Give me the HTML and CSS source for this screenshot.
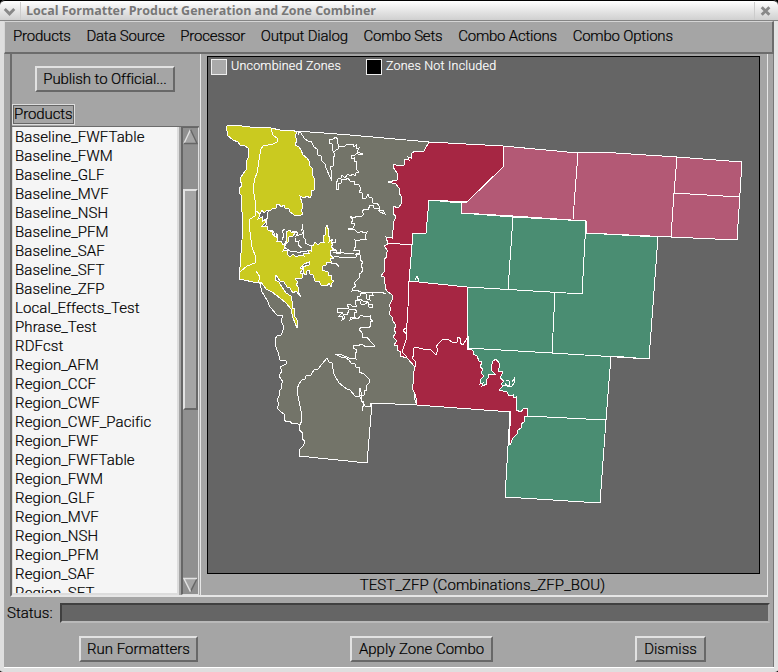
FILE: index.html
```html
<!DOCTYPE html>
<html lang="en">
<head>
<meta charset="utf-8">
<title>Local Formatter Product Generation and Zone Combiner</title>
<link rel="stylesheet" href="styles.css">
</head>
<body>
<div class="window">
  <header class="titlebar">
    <svg class="title-arrow" width="21" height="18" viewBox="0 0 21 18"><path d="M5 7l5 5 5-5" /></svg>
    <h1>Local Formatter Product Generation and Zone Combiner</h1>
    <svg class="title-close" width="24" height="18" viewBox="0 0 24 18"><path d="M7 5l8 8M15 5l-8 8" /></svg>
  </header>
  <nav class="menubar">
    <span>Products</span><span>Data Source</span><span>Processor</span><span>Output Dialog</span><span>Combo Sets</span><span>Combo Actions</span><span>Combo Options</span>
  </nav>
  <main class="panes">
    <aside class="side">
      <button class="btn publish">Publish to Official...</button>
      <div class="list-label">Products</div>
      <div class="list-wrap">
        <ul class="list">
          <li>Baseline_FWFTable</li><li>Baseline_FWM</li><li>Baseline_GLF</li><li>Baseline_MVF</li><li>Baseline_NSH</li><li>Baseline_PFM</li><li>Baseline_SAF</li><li>Baseline_SFT</li><li>Baseline_ZFP</li><li>Local_Effects_Test</li><li>Phrase_Test</li><li>RDFcst</li><li>Region_AFM</li><li>Region_CCF</li><li>Region_CWF</li><li>Region_CWF_Pacific</li><li>Region_FWF</li><li>Region_FWFTable</li><li>Region_FWM</li><li>Region_GLF</li><li>Region_MVF</li><li>Region_NSH</li><li>Region_PFM</li><li>Region_SAF</li><li>Region_SFT</li>
        </ul>
        <div class="scrollbar">
          <svg width="16" height="17" viewBox="0 0 16 17"><path class="arrow" d="M8 1L15 16H1z"/><path class="hi" d="M1 16L8 1"/><path class="lo" d="M8 1l7 15H1"/></svg>
          <div class="track"><div class="thumb"></div></div>
          <svg width="16" height="17" viewBox="0 0 16 17"><path class="arrow" d="M1 1H15L8 15z"/><path class="lo" d="M15 1L8 15"/><path class="hi" d="M15 1H1l7 14"/></svg>
        </div>
      </div>
    </aside>
    <section class="map-pane">
      <div class="canvas">
        <div class="legend"><i class="swatch grey"></i><span class="first">Uncombined Zones</span><i class="swatch black"></i><span>Zones Not Included</span></div>
        <svg class="map" width="551" height="494" viewBox="208 78 551 494">
          <path class="brown" d="M297 131L350 135 429 142 440 146V300L415 367 413 375 414 380 412 388 415 394 414 398 417 405 372 403 367 463 299 456 299 450 303 446 305 442 302 438 303 433 299 430 300 425 296 423 292 424 290 421 286 422 284 419 285 415 280 411 277 408 279 404 277 400 279 396 279 391 282 388 281 384 283 382 279 376 282 371 280 367 286 364 286 361 280 360 278 352 275 345 275 339 278 335 281 335 284 328 281 320 283 316 277 315 270 307 267 300 262 292 258 275 270 200z"/>
          <path class="yellow" d="M227 126L233 125 250 127 271 128 280 130 292 130 297 132 295 136 297 140 295 145 299 147 301 150 303 155 307 158 309 161 310 166 313 169 312 174 314 178 315 182 314 190 311 191 312 194 310 198 307 196 304 198 300 196 302 203 303 208 301 210 303 214 299 216 294 215 290 212 289 209 285 208 284 205 281 207 279 204 277 204 276 208 272 209 270 211 267 210 264 213 262 210 260 214 256 211 260 215 258 219 262 217 262 222 266 219 265 223 262 226 267 226 268 230 273 230 272 234 276 237 276 233 278 235 277 241 281 241 283 245 285 243 285 247 283 251 287 250 287 254 290 257 293 254 296 257 300 255 304 256 303 253 309 253 308 247 311 245 313 246 315 242 318 245 321 242 324 242 323 236 325 235 325 229 327 225 329 232 328 235 330 238 329 242 333 239 331 243 333 244 331 247 335 250 331 250 330 255 334 258 330 259 332 263 327 262 326 265 323 266 322 270 328 272 328 275 331 275 332 280 334 281 332 283 331 287 329 283 327 286 321 285 319 281 315 281 313 275 310 274 309 270 307 271 306 275 303 273 304 268 302 267 309 265 309 262 304 264 300 268 303 269 300 273 303 274 302 278 298 278 295 278 298 283 296 284 299 288 298 291 301 297 296 291 293 293 290 288 287 287 284 282 280 281 276 275 275 280 279 282 282 287 286 293 291 296 292 301 292 308 295 309 294 315 297 320 297 328 293 318 291 309 286 303 280 298 272 292 266 289 261 282 258 283 239 279 240 267 242 240 243 216 241 207 242 196 240 194 239 188 242 186 240 179 243 174 246 170 246 163 249 155 248 148 245 146 240 145 238 142 233 140 227 135 228 132 226 130z"/>
          <path class="brown" d="M284 247l3-4-1-6 3-1 0-3 6-2 3 2-2 3 6-2 2-4-1 7 3 3-1 3 6 3 0 5-3-1-2 2-3-1-5 2-2-2-6 0-3-2z"/>
          <path class="yellow" d="M285 244l2-5-1-7 4-2 1 2 5 0-3 4-4 1-1 5z"/>
          <path class="line" d="M271 128L273 135 278 139 277 142 273 144 263 146 261 149 260 154 257 173 255 178 253 188 254 194 255 200 256 211 255 216 250 219 249 225 252 247 256 258 255 263 247 266 240 272M256 271L260 277 258 283M298 135l0-3 3 1 3 5 5 4 2-1 3 6 3 2 1 6 3 1 1 5 3 3 1 4 5 11M331 181l0-11-1-3 3-1 0-8 2-3-2-4-1-7-3-1 0-3 4-1 3-2 2 3-1 3 2 2-1 4-5 3M338 147l2-1 4 1 3-3 6 0 1 3 2-2 0 4 3-1-2 4 6 2-4 1-2-2-3 3-3-1 0 4 3-1 0 3 3 1-1 7 3 3-3 1-1 3-2-2-3 2-2-2-3 4-3-3-1 3-3 1-2 5 0 6 3-1-1-6 3 0 1-4 3 1 3-2 2 3 5 0-1 3 5 1 2 4-2 3 3 1 0 5 4 0 2-4 1 3 3 1 1 5 4 0 3 4-1 3 4 0 2 4-5-2-1-3-5-1-1-3-3 0-2 5-4-1-2 3 2 2-3 3-4-1-3 2-4-2 3 4-2 3 4 1-2 4-5 1 7 1 3 3 4-2 1 2 4-1-2 4 1 3-5 0-2 2-4-1 1 5-2 5 5 0 0 4-2 1-1 2-12 1-10-2"/>
          <path class="line" d="M355 255l3-2 3 3-1 4 3 2-2 3 2 5-2 3-2 1 0 4-5 5 2 3-3 2-1 3 4-1 5 2 20 0 5 2M372 292l1 3-4 0 1 5-3-1-1-5-5-1-1 3-3 1 0 4 3-2 4 3 3-1 2 3 4 1-1 3-3-1-1-5-4 3-3-1-1-3-4-1-1 4 2 2-4 1-3-3-3 1 2 3-12 1 0 3 6 0-4 4 4 0-1 4 3-2-2-4 4 1 2-5 6-1 2 3-3 1 1 4-4 0-1 3 4-2 4 1 3-4 4 2 5-1 0 3 3 2-3 1 1 4-3 2-6-1-3 2 3 4 0 4 5 0 3 4 5 5-9 1-4-3-5 2-4-1 0 3 4 2-2 5 1 4-7-1-7-3-7-1 6 3 4 0 4 3 2 3 4 1 1 3 3 0 0 5 5 2 5 5 0 4-3 3 1 4-3 1 0 4-2 1-2-8-1 7 3 1-1 5 3 1-2 9"/>
          <path class="line" d="M300 425l2-5-1-9-3-15-1-7 2-5 3-4 3-1 1-3 5-1 3-5 4-1 9-11 2 4 3 1 2 11 5 9 8 6 3 1 5 6 5 1 5 9 5 0 0-3 4 1M332 249l4 1 1 4 4-1-1-4M331 263l5 0 3 4M331 242l4 0 0-3M302 248l-4-3 1-4-3 1-1-4M285 229l-3 2 2 4-2 5M301 231l2-3-1-4M275 235l-2-4-3 0M333 252l21 2"/>
          <path class="green" d="M429 200L461 203V213L513 217 586 221V233L658 237 649 359 611 356 606 420 600 503 505 497 510 412 440 390 409 280 412 233 425 233z"/>
          <path class="pink" d="M503 146L578 153 600 152 677 157 742 162 737 240 671 237 586 233V221L513 216 462 213 461 203 467 202 503 167z"/>
          <path class="crimson" d="M429 142L503 146V167L467 202 429 200 426 233 413 233 409 281 467 287V349L471 349 474 352 473 354 477 356 479 361 482 362 480 367 483 369 481 373 484 376 481 379 480 384 483 383 482 386 487 384 486 380 488 378 488 375 492 374 495 374 491 370 491 367 493 361 496 359 499 363 499 368 498 371 503 372 501 376 500 378 504 381 501 384 503 386 499 390 507 392 509 396 513 395 513 398 516 397V410L521 412 524 408 528 409 527 416 524 417 524 422 521 424 521 428 518 430 517 434 513 438 510 445 509 440 511 412 417 405 416 398 415 394 412 388 414 380 413 375 415 367 407 358 400 356 401 352 397 350 398 346 394 345 397 341 393 337 396 333 394 330 396 325 393 321 392 317 389 314 391 308 389 306 392 300 392 295 387 291 385 288 385 284 384 277 381 276 384 272 384 259 387 257 386 253 388 251 384 246 388 244 386 237 392 238 392 233 394 227 393 223 396 217 393 213 393 206 398 208 402 203 401 196 399 193 399 188 396 184 388 182 397 180 397 173 393 167 394 164 398 166 404 165 405 159 409 160 408 157 411 158 411 154 415 151 424 151z"/>
          <path class="line" d="M387 243L412 245M409 281L408 307 406 340 402 352 407 357M406 328l-3 2 3 4M415 367l0-6-3-3 2-3-1-6 2-2 8 2 7 0 6 6 2-6-2-2 2-3 4-4 6-1 4 3 5 0 1-5 3 2-1 4 3 2 3-5 2-4 1 13M415 280l2-4 2 5M513 217L508 290M586 221L582 294M467 287L583 294M555 292L552 353M467 348L552 353 649 359M611 356L606 420 527 416M578 153L573 219M677 157L674 193 671 237M674 193L739 197M502 385l7 0 0-4-3-1M505 383l2 3 5 0 2-3 0-4-2 3"/>
        </svg>
      </div>
      <p class="caption">TEST_ZFP (Combinations_ZFP_BOU)</p>
    </section>
  </main>
  <div class="status"><label>Status:</label><div class="status-field"></div></div>
  <footer class="actions">
    <button class="btn run">Run Formatters</button>
    <button class="btn apply">Apply Zone Combo</button>
    <button class="btn dismiss">Dismiss</button>
  </footer>
</div>
</body>
</html>
```

FILE: styles.css
```css
* { box-sizing: border-box; }
body { margin: 0; background: #000; font: 300 15px/19px Roboto, sans-serif; color: #000; overflow: hidden; -webkit-text-stroke: 0.2px; }
.window { width: 778px; height: 672px; background: #a5a5a5; border: solid #dedede; border-width: 0 4px 4px; border-right-color: #e3e3e3; border-radius: 5px 5px 3px 3px; display: flex; flex-direction: column; box-shadow: inset -1px 0 #777; }
.titlebar { margin: 0 -4px; flex: 0 0 20px; border-top: 1px solid #000; border-bottom: 1px solid #858585; background: linear-gradient(#fff, #e4e4e4 55%, #d0d0d0); display: flex; align-items: center; border-radius: 5px 5px 0 0; }
.titlebar h1 { flex: 1; margin: 0; padding-left: 5px; font: bold 12.5px/19px "Open Sans", sans-serif; color: #777; letter-spacing: -0.02px; white-space: nowrap; -webkit-text-stroke: 0; }
.titlebar svg { fill: none; stroke: #888; stroke-width: 3; }
.title-arrow { border-right: 1px solid #ccc; }
.title-close { border-left: 1px solid #ccc; }
.menubar { flex: 0 0 33px; display: flex; align-items: center; padding: 0 8px 2px; gap: 15.7px; border: 1px solid #d5d5d5; border-right: 2px solid #6c6c6c; border-bottom: 2px solid #6c6c6c; white-space: nowrap; letter-spacing: -0.2px; }
.panes { flex: 0 0 543px; height: 543px; min-height: 0; margin: 0 6px; display: flex; border-left: 2px solid #6c6c6c; border-bottom: 2px solid #e6e6e6; border-right: 1px solid #e6e6e6; }
.side { width: 189px; height: 541px; border-right: 1px solid #e6e6e6; display: flex; flex-direction: column; align-items: flex-start; }
.btn { height: 26px; padding: 0; border: 2px solid; border-color: #e2e2e2 #686868 #686868 #e2e2e2; background: #a5a5a5; font: inherit; color: #000; white-space: nowrap; letter-spacing: 0; }
.publish { width: 140px; flex-shrink: 0; margin: 12px 0 12px 23px; letter-spacing: -0.1px; }
.list-label { width: 63px; height: 21px; flex-shrink: 0; margin-bottom: 1px; border: 1px solid #dedede; outline: 1px solid #666; outline-offset: -2px; padding-left: 1px; letter-spacing: -0.1px; }
.list-wrap { width: 187px; flex: 1 1 0; min-height: 0; display: flex; justify-content: space-between; border-top: 1px solid #6c6c6c; }
.list { width: 167px; margin: 0; padding: 1px 0 0 2px; border: solid #dcdcdc; border-width: 0 2px 2px 1px; background: #f5f5f5; list-style: none; overflow: hidden; letter-spacing: 0.1px; }
.list li { height: 19px; }
.scrollbar { width: 18px; border: 1px solid #e0e0e0; border-left: 2px solid #666; border-top-color: #666; background: #909090; display: flex; flex-direction: column; }
.scrollbar svg { width: 100%; flex: 0 0 17px; }
.arrow { fill: #a5a5a5; }
.hi { fill: none; stroke: #e2e2e2; stroke-width: 1.5; }
.lo { fill: none; stroke: #666; stroke-width: 1.5; }
.track { flex: 1; padding-top: 44px; }
.thumb { height: 221px; background: #a5a5a5; border: 2px solid; border-color: #e2e2e2 #686868 #686868 #e2e2e2; }
.map-pane { flex: 1; padding: 2px 0 0 6px; }
.canvas { width: 553px; height: 518px; margin-top: 0; border: 1px solid #000; background: #656565; }
.legend { height: 21px; display: flex; align-items: center; padding: 0 0 1px 3px; color: #fff; font: 300 12.5px/20px Roboto, sans-serif; letter-spacing: 0.2px; }
.legend span { margin-top: -2px; }
.swatch { width: 16px; height: 16px; border: 1px solid #eee; margin-right: 4px; }
.swatch.grey { background: #aaa; }
.swatch.black { background: #000; }
.legend .first { width: 135px; }
.map { display: block; shape-rendering: crispEdges; }
.map path { stroke: #fff; stroke-width: 1; }
.map .line { fill: none; }
.brown { fill: #737469; }
.yellow { fill: #caca20; }
.green { fill: #4a8d72; }
.pink { fill: #b35975; }
.crimson { fill: #a62643; }
.caption { margin: 2px 9px 0 0; text-align: center; letter-spacing: 0.1px; }
.status { flex: 0 0 32px; display: flex; align-items: center; padding-left: 3px; }
.status label { width: 53px; }
.status-field { width: 710px; height: 20px; background: #656565; border: 2px solid; border-color: #404040 #aaa #b9b9b9 #404040; }
.actions { flex: 1; display: flex; align-items: flex-start; padding: 7px 0 0 75px; border-bottom: 1px solid #fff; }
.run { width: 119px; margin-right: 152px; }
.apply { width: 143px; margin-right: 142px; }
.dismiss { width: 71px; }
```
